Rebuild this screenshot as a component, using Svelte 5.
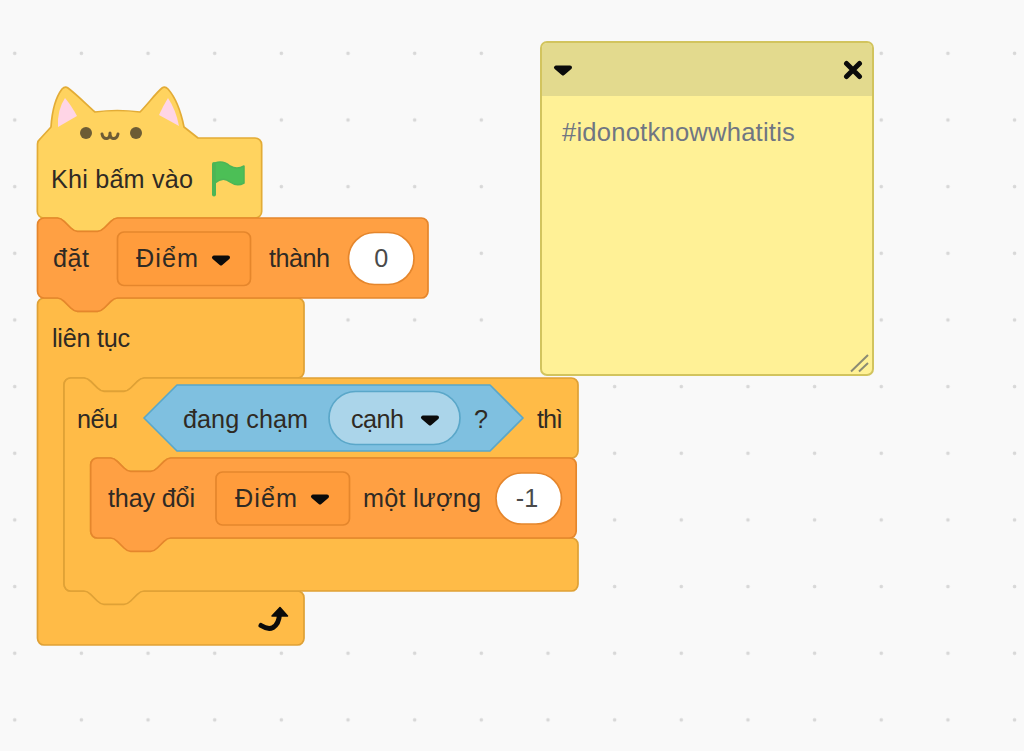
<script>
  const SCALE = 5 / 3;
  const R = 6.67;

  const scaled = (str) => str.replace(/-?\d+(\.\d+)?/g, (m) => (Number(m) * SCALE).toFixed(2));
  const TOP_NOTCH = scaled("c2 0 3 1 4 2 l4 4 c1 1 2 2 4 2 h12 c2 0 3-1 4-2 l4-4 c1-1 2-2 4-2");
  const BOTTOM_NOTCH = scaled("c-2 0-3 1-4 2 l-4 4 c-1 1-2 2-4 2 h-12 c-2 0-3-1-4-2 l-4-4 c-1-1-2-2-4-2");

  const stack = (x, y, w, h) =>
    `M${x} ${y + R} a${R} ${R} 0 0 1 ${R}-${R} H${x + 20} ${TOP_NOTCH} H${x + w - R} a${R} ${R} 0 0 1 ${R} ${R} ` +
    `V${y + h - R} a${R} ${R} 0 0 1-${R} ${R} H${x + 80} ${BOTTOM_NOTCH} H${x + R} a${R} ${R} 0 0 1-${R}-${R} z`;

  // cap blocks (forever) close flat, without the bottom notch
  const cblock = (x, y, w, head, inner, foot, cap = false) =>
    `M${x} ${y + R} a${R} ${R} 0 0 1 ${R}-${R} H${x + 20} ${TOP_NOTCH} H${x + w - R} a${R} ${R} 0 0 1 ${R} ${R} ` +
    `V${y + head - R} a${R} ${R} 0 0 1-${R} ${R} H${x + 106.67} ${BOTTOM_NOTCH} H${x + 26.67 + R} a${R} ${R} 0 0 0-${R} ${R} ` +
    `V${y + head + inner - R} a${R} ${R} 0 0 0 ${R} ${R} H${x + w - R} a${R} ${R} 0 0 1 ${R} ${R} ` +
    `V${y + head + inner + foot - R} a${R} ${R} 0 0 1-${R} ${R} ` +
    (cap ? "" : `H${x + 80} ${BOTTOM_NOTCH} `) +
    `H${x + R} a${R} ${R} 0 0 1-${R}-${R} z`;

  const catHat =
    "M37.5 144 Q37.5 141 40 139 L51 127 C52 112 56 97 62 89 Q65 86 68 88 C76 94 86 104 95 112 Q117 109 140 112 " +
    "C148 104 155 94 162 88 Q165 86 168 89 C175 97 181 112 184 127 L198 138 H255 a6.67 6.67 0 0 1 6.67 6.67 V211.5 " +
    "a6.67 6.67 0 0 1-6.67 6.67 H117.5 " + BOTTOM_NOTCH + " H44 a6.67 6.67 0 0 1-6.67-6.67 z";

  const labels = [
    { x: 51, y: 188, w: 142, text: "Khi bấm vào" },
    { x: 53, y: 267, w: 36, text: "đặt" },
    { x: 136, y: 267, w: 62, text: "Điểm" },
    { x: 269, y: 267, w: 61, text: "thành" },
    { x: 52, y: 347, w: 78, text: "liên tục" },
    { x: 77, y: 428, w: 41, text: "nếu" },
    { x: 183, y: 428, w: 125, text: "đang chạm" },
    { x: 351, y: 428, w: 53, text: "cạnh" },
    { x: 474, y: 428, w: 13, text: "?" },
    { x: 537, y: 428, w: 26, text: "thì" },
    { x: 108, y: 507, w: 87, text: "thay đổi" },
    { x: 235, y: 507, w: 62, text: "Điểm" },
    { x: 363, y: 507, w: 118, text: "một lượng" },
  ];

  const arrows = [
    [212, 255],
    [311, 494],
    [421, 415],
  ];
</script>

<div class="workspace">
  <svg class="blocks" width="1024" height="751" viewBox="0 0 1024 751">
    <path class="control" d={cblock(37.5, 298, 266.5, 80, 213, 54, true)} />
    <path class="hat" d={catHat} />
    <path class="ear" d="M65 98 Q71 105 77 116 L58 127 Q57 110 65 98 z" />
    <path class="ear" d="M168 98 Q176 110 179 126 L159 115 Q163 106 168 98 z" />
    <circle class="face" cx="86" cy="133" r="6" />
    <circle class="face" cx="136" cy="133" r="6" />
    <path class="mouth" d="M102 134 Q103 139 107 138.500 Q110 138 110 133 Q110 138 113 138.500 Q117 139 118 134" />

    <path class="flag-pole" d="M214 194.500 V164" />
    <path class="flag-shape" d="M215 163 Q223 160 230 166 Q237 170 244 166 V183 Q237 187 230 182 Q223 176 215 183 z" />

    <path class="data" d={stack(37.5, 218, 390.5, 80)} />
    <rect class="data-menu" x="117.500" y="232" width="133" height="53.500" rx="6.500" />
    <rect class="field" x="348.500" y="232.500" width="65.500" height="52" rx="26" />
    <text class="field-text" x="381.200" y="267">0</text>

    <path class="control" d={cblock(64, 378, 514, 80, 80, 53)} />
    <path class="sensing" d="M144 418 L177 385 H490 L523 418 L490 451 H177 z" />
    <rect class="sensing-menu" x="329" y="391.500" width="131" height="53" rx="26.500" />

    <path class="data" d={stack(90.67, 458, 485.5, 80)} />
    <rect class="data-menu" x="216" y="472" width="133.500" height="53" rx="6.500" />
    <rect class="field" x="496" y="473" width="65.500" height="51" rx="25.500" />
    <text class="field-text" x="527" y="507">-1</text>

    {#each arrows as [x, y]}
      <path class="arrow" d="M{x + 2} {y + 2.500} H{x + 16} L{x + 9} {y + 8.500} z" />
    {/each}

    <path class="loop-stem" d="M261 625.500 Q268 630 273 627.500 Q279 624 279.500 614" />
    <path class="loop-head" d="M272 616 L280 607.500 L287.500 616 z" />

    {#each labels as label}
      <text class="label" x={label.x} y={label.y} textLength={label.w} lengthAdjust="spacing">{label.text}</text>
    {/each}
  </svg>

  <section class="note">
    <header class="note-head">
      <svg class="note-toggle" width="20" height="12" viewBox="0 0 20 12">
        <path class="arrow" d="M3 2.500 H17 L10 8.500 z" />
      </svg>
      <svg width="20" height="20" viewBox="0 0 20 20">
        <path class="close" d="M3.500 3.500 L16.500 16.500 M16.500 3.500 L3.500 16.500" />
      </svg>
    </header>
    <p class="note-body">#idonotknowwhatitis</p>
    <svg class="grip" width="24" height="24" viewBox="0 0 24 24">
      <path d="M3 21.500 L20 5 M11 21.500 L20 13" />
    </svg>
  </section>
</div>

<style>
  :global(body) {
    background: #f9f9f9;
  }

  .workspace {
    position: relative;
    width: 1024px;
    height: 751px;
    overflow: hidden;
    background-color: #f9f9f9;
    background-image: radial-gradient(circle at center, #d8d8d8 1.4px, transparent 2.2px);
    background-size: 66.667px 66.667px;
    background-position: -18.6px 20px;
    font-family: "Liberation Sans", Arial, sans-serif;
  }

  .blocks {
    position: absolute;
    inset: 0;
  }

  .blocks path,
  .blocks rect {
    stroke-width: 1.7;
    stroke-linejoin: round;
  }

  .hat {
    fill: #ffd35f;
    stroke: #e3ac36;
  }

  .blocks .ear {
    fill: #ffd5e6;
    stroke: none;
  }

  .face {
    fill: #6d5c35;
  }

  .blocks .mouth {
    fill: none;
    stroke: #6d5c35;
    stroke-width: 3;
    stroke-linecap: round;
  }

  .blocks .flag-pole {
    fill: none;
    stroke: #4cb556;
    stroke-width: 4;
    stroke-linecap: round;
  }

  .blocks .flag-shape {
    fill: #4cbf56;
    stroke: #4cb556;
    stroke-width: 1.5;
  }

  .data {
    fill: #ffa043;
    stroke: #e5862c;
  }

  .data-menu {
    fill: #ff9c3c;
    stroke: #e5862c;
  }

  .control {
    fill: #ffbb47;
    stroke: #dfa136;
  }

  .sensing {
    fill: #7fc0e0;
    stroke: #5aa7c9;
  }

  .sensing-menu {
    fill: #abd5ea;
    stroke: #5aa7c9;
  }

  .field {
    fill: #fff;
    stroke: #e5862c;
  }

  .label,
  .field-text {
    font-size: 25.2px;
    fill: #2f2a24;
  }

  .field-text {
    text-anchor: middle;
    fill: #4a4a4a;
  }

  .blocks .arrow,
  .note .arrow {
    fill: #0b0b0b;
    stroke: #0b0b0b;
    stroke-width: 4;
    stroke-linejoin: round;
  }

  .blocks .loop-stem {
    fill: none;
    stroke: #0b0b0b;
    stroke-width: 5;
    stroke-linecap: round;
  }

  .blocks .loop-head {
    fill: #0b0b0b;
    stroke: #0b0b0b;
    stroke-width: 1.5;
  }

  .note {
    position: absolute;
    left: 540px;
    top: 41px;
    width: 334px;
    height: 335px;
    box-sizing: border-box;
    display: flex;
    flex-direction: column;
    background: #fff196;
    border: 2px solid #d2c45e;
    border-radius: 7px;
    overflow: hidden;
  }

  .note-head {
    height: 53px;
    flex: none;
    display: flex;
    align-items: center;
    justify-content: space-between;
    padding: 0 9px 0 11px;
    background: #e3da8e;
  }

  .note-toggle {
    margin-top: 3px;
  }

  .close {
    fill: none;
    stroke: #0b0b0b;
    stroke-width: 5;
    stroke-linecap: round;
  }

  .note-body {
    margin: 0;
    padding: 18px 20px;
    font-size: 25.6px;
    line-height: 36px;
    letter-spacing: 0.21px;
    color: #707682;
  }

  .grip {
    position: absolute;
    right: 0;
    bottom: 0;
  }

  .grip path {
    fill: none;
    stroke: #8c8c74;
    stroke-width: 2;
  }
</style>
